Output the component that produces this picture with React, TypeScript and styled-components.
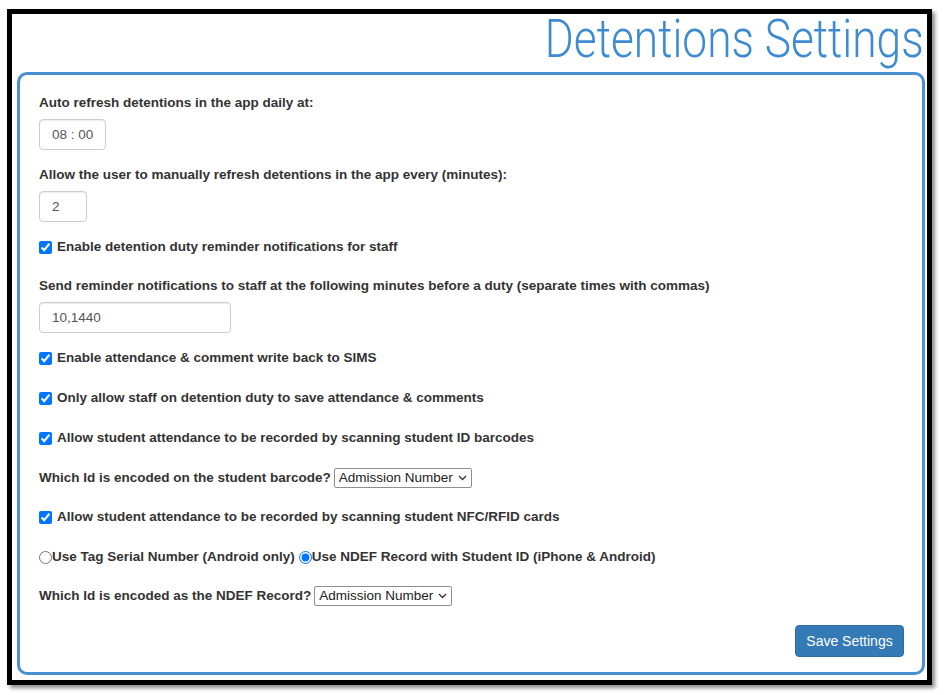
import React from "react";
import styled, { createGlobalStyle } from "styled-components";

const Global = createGlobalStyle`
  html, body { margin: 0; padding: 0; background: #fff; }
  body { font-family: "Liberation Sans", Arial, sans-serif; }
`;

const Page = styled.div`
  padding: 9px 0 0 7px;
  width: 945px;
  height: 695px;
  box-sizing: border-box;
`;

const Frame = styled.div`
  width: 925px;
  height: 676px;
  box-sizing: border-box;
  border: 5px solid #000;
  box-shadow: 3px 3px 4px rgba(0, 0, 0, 0.45);
  background: #fff;
  display: flex;
  flex-direction: column;
  padding: 0 2px 5px 5px;
`;

const Title = styled.h1`
  margin: 0;
  height: 58px;
  text-align: right;
  padding-right: 1px;
  font-family: Roboto, "Liberation Sans", sans-serif;
  font-weight: 300;
  font-size: 53px;
  line-height: 50px;
  color: #3f8bd2;
  white-space: nowrap;
`;

const TitleText = styled.span`
  display: inline-block;
  transform: scaleX(0.835);
  transform-origin: right center;
`;

const Panel = styled.div`
  flex: 1;
  border: 3px solid #4a90d0;
  border-radius: 10px;
  padding: 18px 18px 0 19px;
  display: flex;
  flex-direction: column;
  color: #333;
  font-size: 13.5px;
`;

const Group = styled.div`
  display: flex;
  flex-direction: column;
  align-items: flex-start;
  margin-bottom: 15px;
`;

const Label = styled.label`
  font-weight: bold;
  line-height: 20px;
  margin-bottom: 6px;
`;

const TextInput = styled.input<{ $w: number }>`
  width: ${(p) => p.$w}px;
  height: 31px;
  box-sizing: border-box;
  border: 1px solid #ccc;
  border-radius: 4px;
  padding: 0 12px;
  font-family: "Liberation Sans", Arial, sans-serif;
  font-size: 13.5px;
  color: #555;
  box-shadow: inset 0 1px 1px rgba(0, 0, 0, 0.075);
  outline: none;
`;

const Row = styled.div<{ $gap?: number }>`
  display: flex;
  align-items: center;
  line-height: 20px;
  height: 20px;
  font-weight: bold;
  margin-bottom: ${(p) => p.$gap ?? 20}px;
`;

const Check = styled.input`
  width: 13px;
  height: 13px;
  margin: 0 5px 0 0;
`;

const Radio = styled.input`
  width: 13px;
  height: 13px;
  margin: 0;
`;

const RadioText = styled.span`
  margin-right: 4px;
`;

const SelectWrap = styled.span`
  position: relative;
  display: inline-flex;
  margin-left: 3px;
`;

const Select = styled.select`
  appearance: none;
  height: 20px;
  font-family: "Liberation Sans", Arial, sans-serif;
  font-size: 13.5px;
  font-weight: normal;
  color: #222;
  border: 1px solid #8f8f8f;
  border-radius: 2px;
  background: #fff;
  padding: 0 17px 0 4px;
  line-height: 18px;
`;

const Chevron = styled.svg`
  position: absolute;
  right: 5px;
  top: 7px;
  pointer-events: none;
`;

const Footer = styled.div`
  display: flex;
  justify-content: flex-end;
`;

const Button = styled.button`
  width: 109px;
  height: 32px;
  background: #337ab7;
  border: 1px solid #2e6da4;
  border-radius: 4px;
  color: #fff;
  font-family: "Liberation Sans", Arial, sans-serif;
  font-size: 14px;
`;

function IdSelect() {
  return (
    <SelectWrap>
      <Select defaultValue="adm">
        <option value="adm">Admission Number</option>
        <option value="upn">UPN</option>
      </Select>
      <Chevron width="9" height="6" viewBox="0 0 9 6">
        <path d="M1 1 L4.5 4.5 L8 1" fill="none" stroke="#333" strokeWidth="1.3" />
      </Chevron>
    </SelectWrap>
  );
}

export default function App() {
  return (
    <Page>
      <Global />
      <Frame>
        <Title>
          <TitleText>Detentions Settings</TitleText>
        </Title>
        <Panel>
          <Group>
            <Label>Auto refresh detentions in the app daily at:</Label>
            <TextInput $w={67} defaultValue="08 : 00" />
          </Group>
          <Group>
            <Label>Allow the user to manually refresh detentions in the app every (minutes):</Label>
            <TextInput $w={48} defaultValue="2" />
          </Group>
          <Row $gap={19}>
            <Check type="checkbox" defaultChecked />
            Enable detention duty reminder notifications for staff
          </Row>
          <Group>
            <Label>Send reminder notifications to staff at the following minutes before a duty (separate times with commas)</Label>
            <TextInput $w={192} defaultValue="10,1440" />
          </Group>
          <Row>
            <Check type="checkbox" defaultChecked />
            Enable attendance &amp; comment write back to SIMS
          </Row>
          <Row>
            <Check type="checkbox" defaultChecked />
            Only allow staff on detention duty to save attendance &amp; comments
          </Row>
          <Row>
            <Check type="checkbox" defaultChecked />
            Allow student attendance to be recorded by scanning student ID barcodes
          </Row>
          <Row $gap={19}>
            Which Id is encoded on the student barcode?
            <IdSelect />
          </Row>
          <Row>
            <Check type="checkbox" defaultChecked />
            Allow student attendance to be recorded by scanning student NFC/RFID cards
          </Row>
          <Row $gap={19}>
            <Radio type="radio" name="nfc" />
            <RadioText>Use Tag Serial Number (Android only)</RadioText>
            <Radio type="radio" name="nfc" defaultChecked />
            <span>Use NDEF Record with Student ID (iPhone &amp; Android)</span>
          </Row>
          <Row $gap={19}>
            Which Id is encoded as the NDEF Record?
            <IdSelect />
          </Row>
          <Footer>
            <Button>Save Settings</Button>
          </Footer>
        </Panel>
      </Frame>
    </Page>
  );
}
